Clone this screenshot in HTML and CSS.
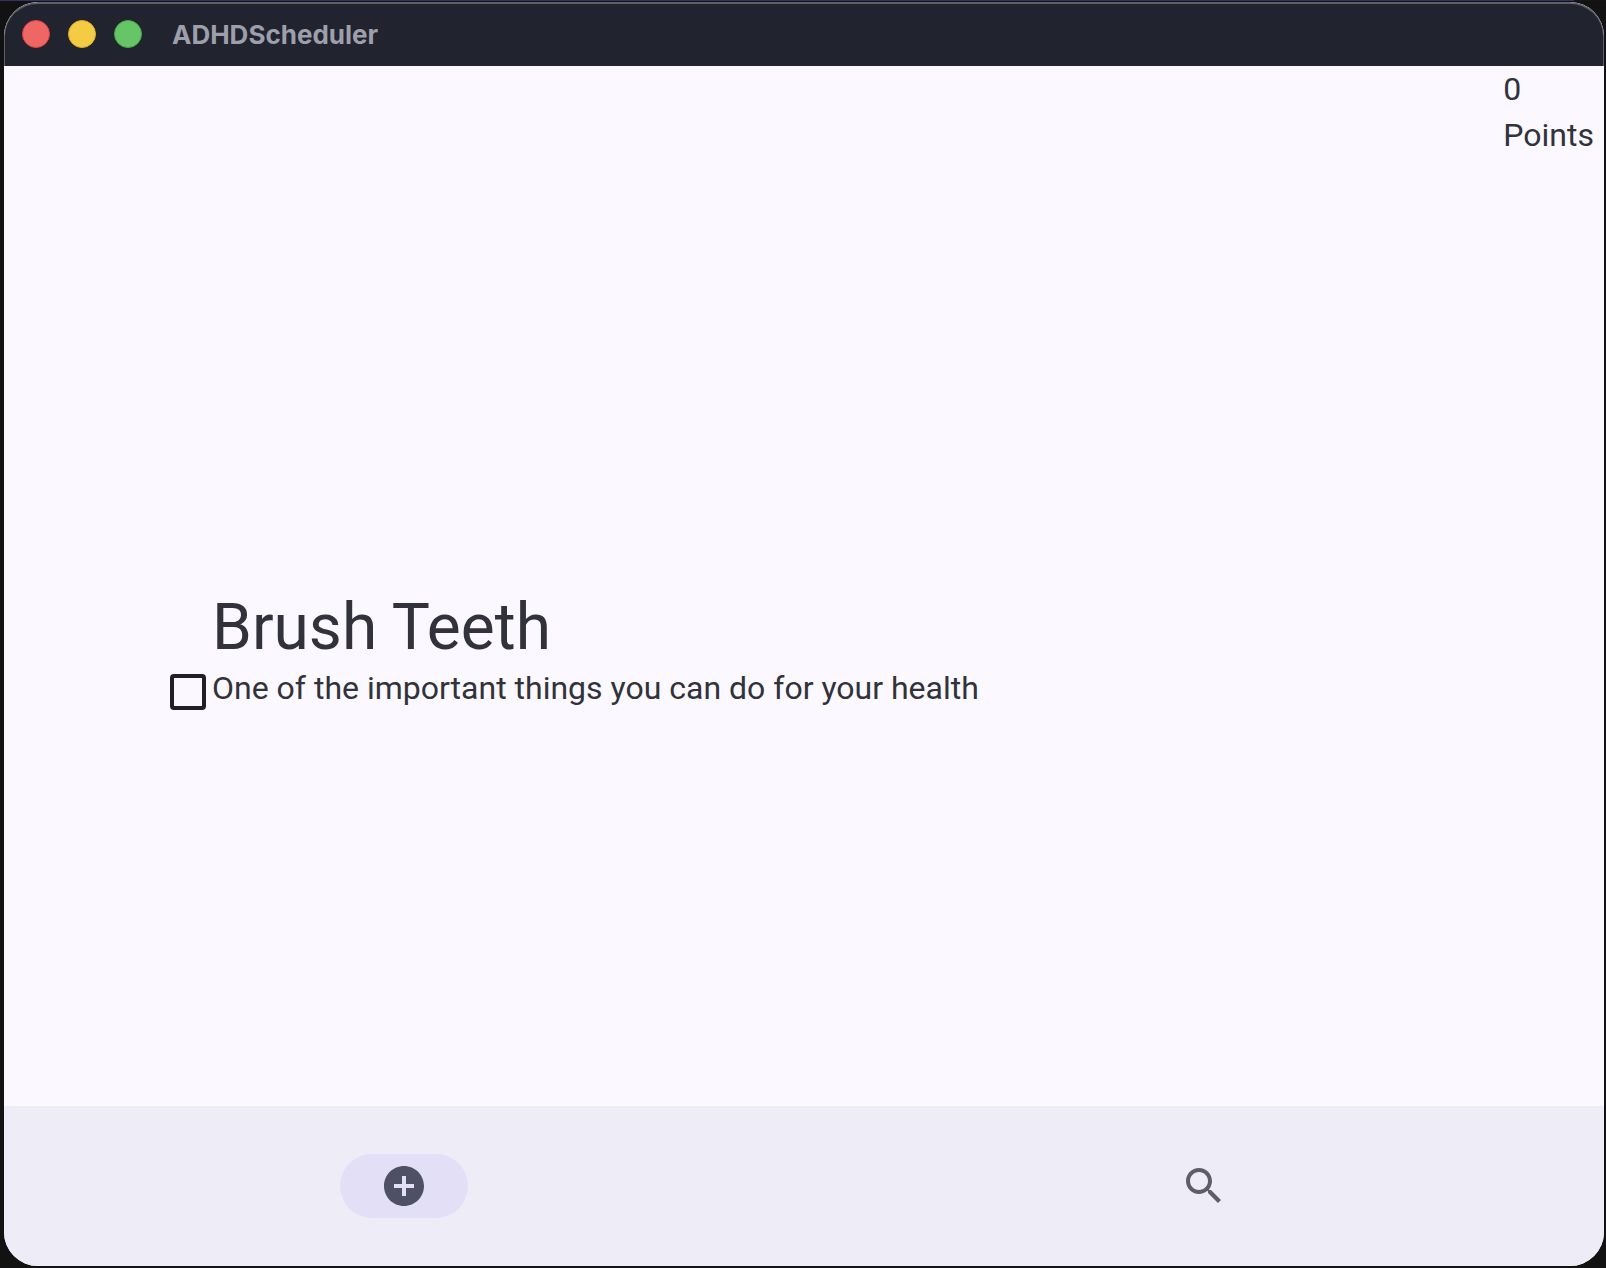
FILE: index.html
```html
<!DOCTYPE html>
<html lang="en">
<head>
    <meta charset="UTF-8">
    <meta name="viewport" content="width=device-width, initial-scale=1.0">
    <title>ADHDScheduler</title>
    <link rel="stylesheet" href="styles.css">
</head>
<body>
    <div class="window">
        <header class="title-bar">
            <div class="window-buttons">
                <button type="button" class="close" aria-label="Close"></button>
                <button type="button" class="minimize" aria-label="Minimize"></button>
                <button type="button" class="zoom" aria-label="Zoom"></button>
            </div>
            <h1 class="app-name">ADHDScheduler</h1>
        </header>

        <main class="content">
            <div class="points">
                <div>0</div>
                <div>Points</div>
            </div>
            <div class="task">
                <input type="checkbox" id="task_done" class="task-check">
                <label for="task_done" class="task-text">
                    <span class="task-title">Brush Teeth</span>
                    <span class="task-desc">One of the important things you can do for your health</span>
                </label>
            </div>
        </main>

        <nav class="nav-bar">
            <button type="button" class="nav-item active" aria-label="Add">
                <svg class="icon" viewBox="0 0 24 24">
                    <path d="M12 2C6.48 2 2 6.48 2 12s4.48 10 10 10 10-4.48 10-10S17.52 2 12 2zm5 11h-4v4h-2v-4H7v-2h4V7h2v4h4v2z"/>
                </svg>
            </button>
            <button type="button" class="nav-item" aria-label="Search">
                <svg class="icon" viewBox="0 0 24 24">
                    <path d="M15.5 14h-.79l-.28-.27C15.41 12.59 16 11.11 16 9.5 16 5.91 13.09 3 9.5 3S3 5.91 3 9.5 5.91 16 9.5 16c1.61 0 3.09-.59 4.23-1.57l.27.28v.79l5 4.99L20.49 19l-4.99-5zm-6 0C7.01 14 5 11.99 5 9.5S7.01 5 9.5 5 14 7.01 14 9.5 11.99 14 9.5 14z"/>
                </svg>
            </button>
        </nav>
    </div>
</body>
</html>
```

FILE: styles.css
```css
* {
    box-sizing: border-box;
}

body {
    margin: 0;
    padding: 2px 2px 2px 4px;
    height: 100vh;
    background: linear-gradient(to right, #35306b 98%, #151515 98%) top / 100% 1px no-repeat #121213;
    font-family: Roboto, sans-serif;
    font-size: 32px;
    color: #31323a;
}

.window {
    display: flex;
    flex-direction: column;
    height: 100%;
    border-radius: 34px;
    overflow: hidden;
    background-color: #fbf9ff;
}

.title-bar {
    display: flex;
    align-items: center;
    gap: 30px;
    height: 64px;
    padding: 0 17px 2px;
    background-color: #21232e;
    border: 1px solid #5f6068;
    border-top-width: 2px;
    border-bottom: none;
    border-radius: 34px 34px 0 0;
}

.window-buttons {
    display: flex;
    gap: 18px;
}

.window-buttons button {
    width: 28px;
    height: 28px;
    padding: 0;
    border: 1px solid;
    border-radius: 50%;
}

.window-buttons .close {
    background-color: #ee6764;
    border-color: #dc4643;
}

.window-buttons .minimize {
    background-color: #f4cb45;
    border-color: #dfae22;
}

.window-buttons .zoom {
    background-color: #66c567;
    border-color: #43ad45;
}

.app-name {
    margin: 0;
    font-family: Inter, sans-serif;
    font-size: 26px;
    font-weight: 700;
    color: #9d9faa;
}

.content {
    flex: 1;
    display: flex;
    flex-direction: column;
}

.points {
    align-self: flex-end;
    padding-right: 10px;
    line-height: 46px;
}

.task {
    flex: 1;
    display: flex;
    align-items: center;
    gap: 6px;
    padding: 40px 0 0 166px;
}

.task-check {
    appearance: none;
    width: 36px;
    height: 36px;
    margin: 80px 0 0;
    border: 4px solid #201f25;
    border-radius: 4px;
}

.task-check:checked {
    background-color: #555a92;
}

.task-text {
    display: flex;
    flex-direction: column;
}

.task-title {
    font-size: 64px;
    line-height: 72px;
}

.task-desc {
    line-height: 48px;
}

.nav-bar {
    display: flex;
    height: 160px;
    background-color: #eeecf6;
}

.nav-item {
    flex: 1;
    display: flex;
    align-items: center;
    justify-content: center;
    padding: 0;
    border: none;
    background: none;
    color: #5f5d67;
}

.nav-item.active {
    color: #505064;
}

.icon {
    width: 128px;
    height: 64px;
    padding: 8px 40px;
    border-radius: 32px;
    fill: currentColor;
}

.active .icon {
    background-color: #e2dff6;
}
```
